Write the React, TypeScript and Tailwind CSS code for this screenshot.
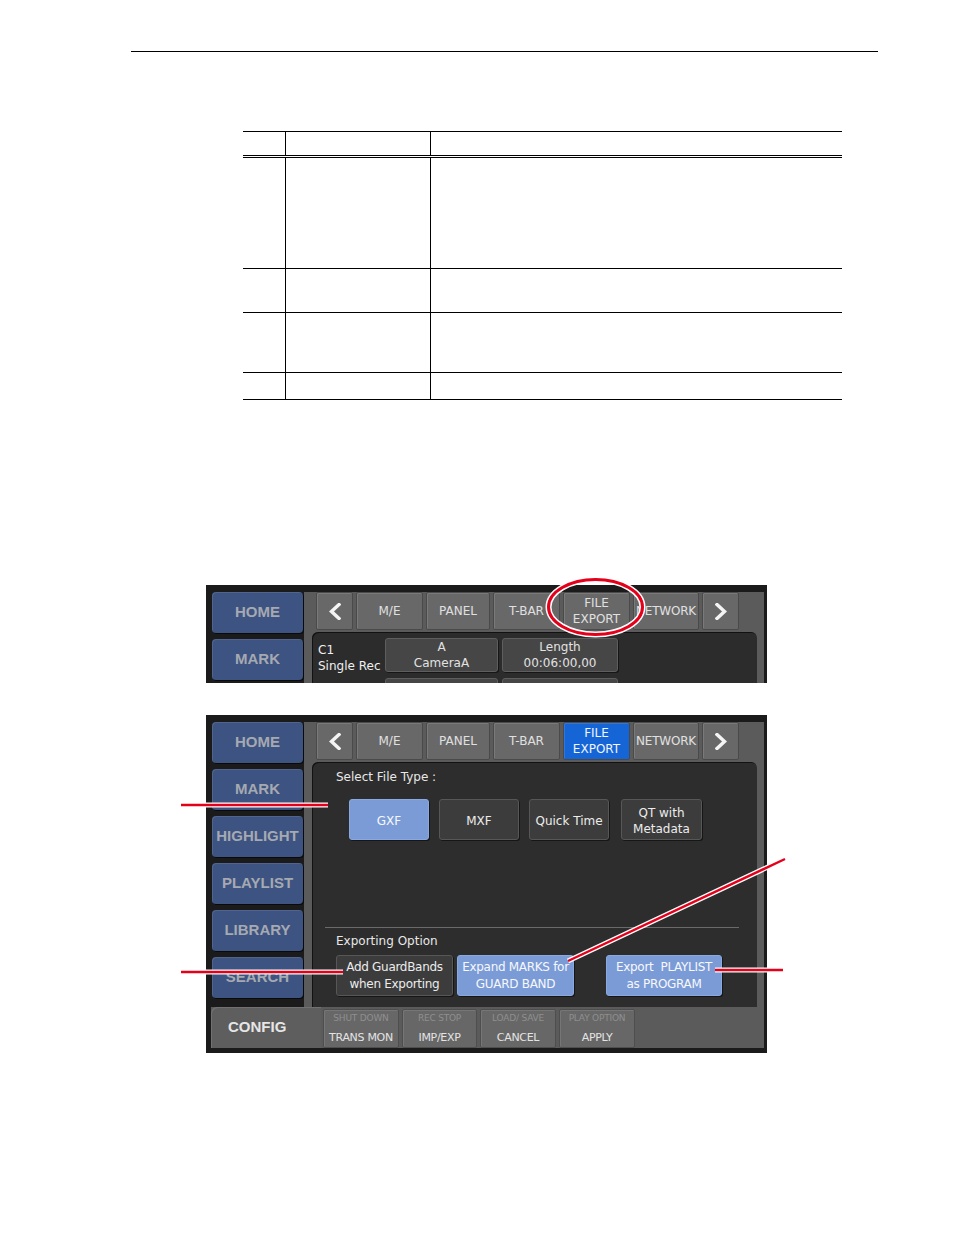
import React from "react";

function Chevron({ dir }: { dir: "left" | "right" }) {
  return (
    <svg width="12" height="17" viewBox="0 0 12 17">
      <polyline
        points={dir === "left" ? "10,1.5 2.5,8.5 10,15.5" : "2,1.5 9.5,8.5 2,15.5"}
        fill="none"
        stroke="#f4f4f4"
        strokeWidth="3.4"
        strokeLinecap="square"
      />
    </svg>
  );
}

const tabBase =
  "h-full flex items-center justify-center text-center text-[12px] leading-[16px] rounded-[2px] border border-[#4a4a4a] shadow-[inset_1px_1px_0_rgba(255,255,255,0.12)]";
const tabGray = "bg-[#686868] text-[#e0e0e0]";

function Tabs({ active }: { active: boolean }) {
  return (
    <div className="flex h-[38px] shrink-0 gap-[3px] pl-[12px] font-['DejaVu_Sans',sans-serif]">
      <div className={`${tabBase} ${tabGray} w-[37px]`}>
        <Chevron dir="left" />
      </div>
      <div className={`${tabBase} ${tabGray} w-[67px]`}>M/E</div>
      <div className={`${tabBase} ${tabGray} w-[64px]`}>PANEL</div>
      <div className={`${tabBase} ${tabGray} w-[67px]`}>T-BAR</div>
      <div
        className={
          active
            ? `${tabBase} w-[67px] bg-[#1565d6] border-[#1f5cb8] text-[#f2f6ff]`
            : `${tabBase} ${tabGray} w-[67px]`
        }
      >
        FILE
        <br />
        EXPORT
      </div>
      <div className={`${tabBase} ${tabGray} w-[66px] tracking-[-0.2px]`}>NETWORK</div>
      <div className={`${tabBase} ${tabGray} w-[37px]`}>
        <Chevron dir="right" />
      </div>
    </div>
  );
}

const sideBtn =
  "h-[41px] w-[91px] shrink-0 rounded-[4px] bg-[#3d5381] flex items-center justify-center text-[15px] font-bold text-[#a5a9b1] font-['Liberation_Sans',Arial,sans-serif] shadow-[inset_1px_1px_0_rgba(255,255,255,0.1),1px_1px_0_rgba(0,0,0,0.6)]";

function Sidebar({ short }: { short?: boolean }) {
  return (
    <div className="w-[98px] shrink-0 pl-[6px] flex flex-col gap-[6px]">
      <div className={sideBtn}>HOME</div>
      <div className={sideBtn}>MARK</div>
      {!short && (
        <>
          <div className={sideBtn}>HIGHLIGHT</div>
          <div className={sideBtn}>PLAYLIST</div>
          <div className={sideBtn}>LIBRARY</div>
          <div className={sideBtn}>SEARCH</div>
        </>
      )}
    </div>
  );
}

const botBtn =
  "h-[39px] shrink-0 bg-[#676767] border border-[#4e4e4e] rounded-[2px] flex flex-col items-center pt-[2px] font-['DejaVu_Sans',sans-serif] shadow-[inset_1px_1px_0_rgba(255,255,255,0.1)]";

function BottomBtn({ small, main, w }: { small: string; main: string; w: string }) {
  return (
    <div className={`${botBtn} ${w}`}>
      <div className="text-[9px] leading-[12px] text-[#8f8f8f] tracking-[-0.2px]">{small}</div>
      <div className="mt-[7px] text-[11px] leading-[14px] text-[#e4e4e4] tracking-[-0.3px]">{main}</div>
    </div>
  );
}

const panelBtn =
  "rounded-[3px] flex flex-col items-center justify-center text-center text-[12px] leading-[16px] font-['DejaVu_Sans',sans-serif] shadow-[1px_1px_0_rgba(0,0,0,0.5)]";
const darkBtn = "bg-[#3c3c3c] border border-[#575757] text-[#ececec]";
const blueBtn = "bg-[#7b9bd6] border border-[#8aa9e0] text-[#f6f8fc]";

function BottomScreen() {
  return (
    <div className="ml-[206px] mt-[32px] w-[561px] h-[338px] bg-[#1b1b1b] pt-[7px] pr-[3px] pb-[5px] flex flex-col">
      <div className="flex h-[285px] shrink-0">
        <Sidebar />
        <div className="flex-1 bg-[#5b5b5b] flex flex-col">
          <Tabs active={true} />
          <div className="mt-[2px] ml-[8px] mr-[7px] flex-1 bg-[#2d2d2d] rounded-t-[6px] shadow-[inset_1px_1px_0_rgba(0,0,0,0.6)] flex flex-col font-['DejaVu_Sans',sans-serif]">
            <div className="pt-[8px] pl-[24px] text-[12px] leading-[15px] text-[#e8e8e8]">Select File Type :</div>
            <div className="mt-[14px] ml-[37px] flex gap-[10px] h-[41px]">
              <div className={`${panelBtn} ${blueBtn} w-[80px] pt-[3px]`}>GXF</div>
              <div className={`${panelBtn} ${darkBtn} w-[80px] pt-[3px]`}>MXF</div>
              <div className={`${panelBtn} ${darkBtn} w-[80px] pt-[3px]`}>Quick Time</div>
              <div className={`${panelBtn} ${darkBtn} w-[81px] ml-[2px] pt-[3px]`}>
                QT with
                <br />
                Metadata
              </div>
            </div>
            <div className="mt-[87px] ml-[13px] w-[414px] h-px bg-[#6a6a6a]" />
            <div className="mt-[6px] pl-[24px] text-[12px] leading-[15px] text-[#e8e8e8]">Exporting Option</div>
            <div className="mt-[6px] ml-[24px] flex h-[41px]">
              <div className={`${panelBtn} ${darkBtn} w-[117px] leading-[17px] tracking-[-0.3px]`}>
                Add GuardBands
                <br />
                when Exporting
              </div>
              <div className={`${panelBtn} ${blueBtn} w-[117px] ml-[4px] leading-[17px] tracking-[-0.3px]`}>
                Expand MARKS for
                <br />
                GUARD BAND
              </div>
              <div className={`${panelBtn} ${blueBtn} w-[116px] ml-[32px] leading-[17px] tracking-[-0.3px]`}>
                Export&nbsp; PLAYLIST
                <br />
                as PROGRAM
              </div>
            </div>
          </div>
        </div>
      </div>
      <div className="flex h-[41px] ml-[5px] bg-[#5b5b5b] items-end">
        <div className="h-full w-[110px] shrink-0 rounded-tl-[6px] bg-[#5e5e5e] flex items-center pl-[17px] text-[15px] font-bold text-[#e6e6e6] font-['Liberation_Sans',Arial,sans-serif] shadow-[inset_1px_1px_0_rgba(255,255,255,0.12)]">
          CONFIG
        </div>
        <div className="ml-[2px] flex gap-[3px]">
          <BottomBtn small="SHUT DOWN" main="TRANS MON" w="w-[76px]" />
          <BottomBtn small="REC STOP" main="IMP/EXP" w="w-[75px]" />
          <BottomBtn small="LOAD/ SAVE" main="CANCEL" w="w-[76px]" />
          <BottomBtn small="PLAY OPTION" main="APPLY" w="w-[76px]" />
        </div>
      </div>
    </div>
  );
}

const clipBtn = "bg-[#464646] border border-[#5e5e5e] text-[#e2e2e2]";

function TopScreen() {
  return (
    <div className="ml-[206px] mt-[185px] w-[561px] h-[98px] overflow-hidden bg-[#1b1b1b] pt-[7px] pr-[3px]">
      <div className="flex h-[100px]">
        <Sidebar short />
        <div className="flex-1 bg-[#5b5b5b] flex flex-col">
          <Tabs active={false} />
          <div className="mt-[2px] ml-[8px] mr-[7px] flex-1 bg-[#2c2c2c] rounded-t-[6px] shadow-[inset_1px_1px_0_rgba(0,0,0,0.6)] flex flex-col pt-[6px] font-['DejaVu_Sans',sans-serif]">
            <div className="flex h-[34px] shrink-0">
              <div className="w-[73px] pl-[6px] pt-[4px] text-[12px] leading-[16px] text-[#f0f0f0]">
                C1
                <br />
                Single Rec
              </div>
              <div className={`${panelBtn} ${clipBtn} w-[113px]`}>
                A
                <br />
                CameraA
              </div>
              <div className={`${panelBtn} ${clipBtn} w-[116px] ml-[4px]`}>
                Length
                <br />
                00:06:00,00
              </div>
            </div>
            <div className="flex h-[34px] mt-[6px] shrink-0">
              <div className="w-[73px]" />
              <div className={`${clipBtn} rounded-[3px] w-[113px]`} />
              <div className={`${clipBtn} rounded-[3px] w-[116px] ml-[4px]`} />
            </div>
          </div>
        </div>
      </div>
    </div>
  );
}

function Table() {
  const c1 = "w-[43px] shrink-0 border-r border-black";
  const c2 = "w-[145px] shrink-0 border-r border-black";
  return (
    <div className="ml-[243px] mt-[79px] w-[599px] border-t border-black">
      <div className="flex h-[26px] border-b-[3px] border-double border-black">
        <div className={c1} />
        <div className={c2} />
        <div className="flex-1" />
      </div>
      <div className="flex h-[111px] border-b border-black">
        <div className={c1} />
        <div className={c2} />
        <div className="flex-1" />
      </div>
      <div className="flex h-[44px] border-b border-black">
        <div className={c1} />
        <div className={c2} />
        <div className="flex-1" />
      </div>
      <div className="flex h-[60px] border-b border-black">
        <div className={c1} />
        <div className={c2} />
        <div className="flex-1" />
      </div>
      <div className="flex h-[27px] border-b border-black">
        <div className={c1} />
        <div className={c2} />
        <div className="flex-1" />
      </div>
    </div>
  );
}

function Callouts() {
  const lines: [number, number, number, number][] = [
    [181, 805, 328, 805],
    [181, 972, 343, 972],
    [785, 859, 568, 961],
    [715, 970, 783, 970],
  ];
  return (
    <svg
      className="absolute top-0 left-0 pointer-events-none"
      width="954"
      height="1235"
      viewBox="0 0 954 1235"
    >
      <ellipse cx="595.5" cy="607" rx="47" ry="27.5" fill="none" stroke="#ffffff" strokeWidth="6" />
      <ellipse cx="595.5" cy="607" rx="47" ry="27.5" fill="none" stroke="#e4001b" strokeWidth="3" />
      {lines.map(([x1, y1, x2, y2], i) => (
        <g key={i}>
          <line x1={x1} y1={y1} x2={x2} y2={y2} stroke="#ffffff" strokeWidth="5" />
          <line x1={x1} y1={y1} x2={x2} y2={y2} stroke="#e4001b" strokeWidth="2.4" />
        </g>
      ))}
    </svg>
  );
}

export default function App() {
  return (
    <div className="relative w-[954px] h-[1235px] bg-white overflow-hidden">
      <div className="pt-[51px]">
        <div className="ml-[131px] w-[747px] h-px bg-black" />
      </div>
      <Table />
      <TopScreen />
      <BottomScreen />
      <Callouts />
    </div>
  );
}
